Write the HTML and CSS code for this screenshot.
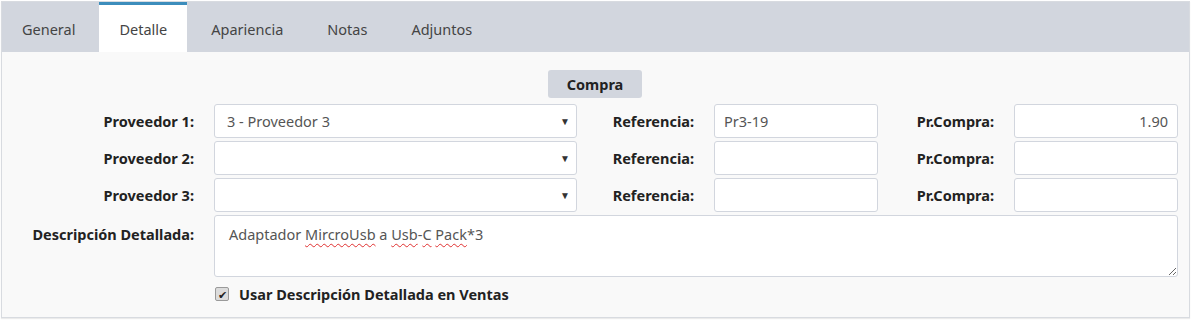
FILE: index.html
```html
<!DOCTYPE html>
<html lang="es">
<head>
    <meta charset="UTF-8">
    <title>Detalle</title>
    <link rel="stylesheet" href="styles.css">
</head>
<body>
    <div class="panel">
        <ul class="tabs">
            <li>General</li>
            <li class="active">Detalle</li>
            <li>Apariencia</li>
            <li>Notas</li>
            <li>Adjuntos</li>
        </ul>

        <div class="tab-content">
            <div class="section-title"><span>Compra</span></div>

            <div class="form-grid">
                <label>Proveedor 1:</label>
                <div class="select-wrap">
                    <select><option>3 - Proveedor 3</option></select>
                    <span class="caret">▼</span>
                </div>
                <label>Referencia:</label>
                <input type="text" value="Pr3-19">
                <label>Pr.Compra:</label>
                <input type="text" class="num" value="1.90">

                <label>Proveedor 2:</label>
                <div class="select-wrap">
                    <select><option></option></select>
                    <span class="caret">▼</span>
                </div>
                <label>Referencia:</label>
                <input type="text" value="">
                <label>Pr.Compra:</label>
                <input type="text" class="num" value="">

                <label>Proveedor 3:</label>
                <div class="select-wrap">
                    <select><option></option></select>
                    <span class="caret">▼</span>
                </div>
                <label>Referencia:</label>
                <input type="text" value="">
                <label>Pr.Compra:</label>
                <input type="text" class="num" value="">

                <label class="top">Descripción Detallada:</label>
                <div class="textarea">Adaptador <span class="typo">MircroUsb</span> a <span class="typo">Usb</span>-<span class="typo">C</span> <span class="typo">Pack</span>*3</div>

                <div class="check-row">
                    <span class="check">✔</span>
                    <span class="check-label">Usar Descripción Detallada en Ventas</span>
                </div>
            </div>
        </div>
    </div>
</body>
</html>
```

FILE: styles.css
```css
body {
    margin: 0;
    font-family: "Noto Sans", "Liberation Sans", sans-serif;
    font-size: 14.5px;
    color: #333;
    background: #fff;
}
.panel {
    margin: 1px 2px 2px 1px;
    border: 1px solid #d8dbe0;
    background: #f9f9f9;
    box-shadow: 0 1px 1px rgba(0, 0, 0, 0.08);
}
.tabs {
    display: flex;
    margin: 0;
    padding: 0;
    list-style: none;
    height: 50px;
    background: #d2d6de;
}
.tabs li {
    display: flex;
    align-items: center;
    padding: 3px 20px 0;
    margin-right: 4px;
    color: #444;
}
.tabs li.active {
    background: #fff;
    border-top: 3px solid #3c8dbc;
    padding-top: 0;
}
.tab-content {
    padding: 18px 10px 9px 9px;
}
.section-title {
    text-align: center;
    margin-bottom: 6px;
}
.section-title span {
    display: inline-block;
    background: #d2d6de;
    border-radius: 3px;
    padding: 0 19px;
    line-height: 28px;
    font-weight: bold;
    color: #222;
}
.form-grid {
    display: grid;
    grid-template-columns: 183px 363px 97px 164px 96px 164px;
    grid-template-rows: 34px 34px 34px 62px 28px;
    column-gap: 20px;
    row-gap: 3px;
}
.form-grid label {
    align-self: center;
    text-align: right;
    font-weight: bold;
    color: #222;
    white-space: nowrap;
}
.form-grid label.top {
    align-self: start;
    padding-top: 9px;
}
input,
select {
    box-sizing: border-box;
    width: 100%;
    height: 34px;
    border: 1px solid #d2d6de;
    border-radius: 3px;
    background: #fff;
    font-family: inherit;
    font-size: 14.5px;
    color: #555;
    padding: 0 9px;
    margin: 0;
}
input.num {
    text-align: right;
}
.select-wrap {
    position: relative;
}
select {
    appearance: none;
    padding: 0 12px;
}
.caret {
    position: absolute;
    right: 7px;
    top: 10px;
    font-size: 10px;
    color: #333;
}
.textarea {
    grid-column: 2 / 7;
    box-sizing: border-box;
    border: 1px solid #d2d6de;
    border-radius: 3px;
    background: #fff;
    padding: 8px 14px;
    color: #555;
    overflow: auto;
    resize: vertical;
}
.typo {
    text-decoration: underline wavy #e03030;
    text-decoration-thickness: 1px;
    text-underline-offset: 3px;
}
.check-row {
    grid-column: 2 / 7;
    display: flex;
    align-items: center;
    gap: 10px;
    padding-left: 1px;
}
.check {
    display: inline-flex;
    align-items: center;
    justify-content: center;
    width: 12px;
    height: 12px;
    border: 1px solid #9a9a9a;
    border-radius: 2px;
    background: #dcdcdc;
    font-size: 11px;
    color: #222;
}
.check-label {
    font-weight: bold;
    color: #222;
}
```
